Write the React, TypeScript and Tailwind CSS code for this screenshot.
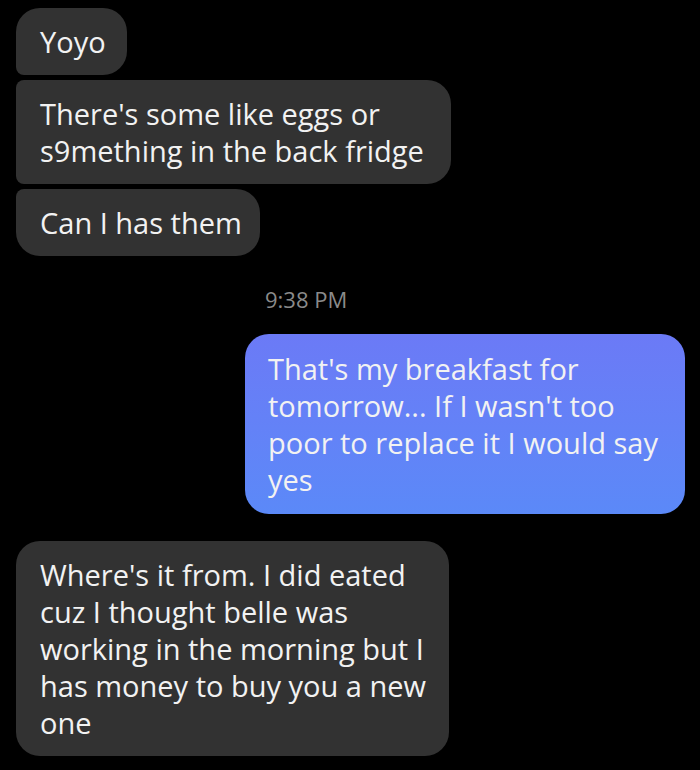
const FONT = "font-['Open_Sans',_'Noto_Sans',_sans-serif]";

type Msg = { lines: string[]; shape: string; width: string };

const firstGroup: Msg[] = [
  { lines: ["Yoyo"], shape: "rounded-tl-[24px] rounded-tr-[24px] rounded-br-[24px] rounded-bl-[8px]", width: "w-[111px]" },
  {
    lines: ["There's some like eggs or", "s9mething in the back fridge"],
    shape: "rounded-tl-[8px] rounded-tr-[24px] rounded-br-[24px] rounded-bl-[8px]",
    width: "w-[435px]",
  },
  { lines: ["Can I has them"], shape: "rounded-tl-[8px] rounded-tr-[24px] rounded-br-[24px] rounded-bl-[24px]", width: "w-[244px]" },
];

function Bubble({ msg, tone }: { msg: Msg; tone: "gray" | "blue" }) {
  return (
    <div
      className={[
        "text-[29px] leading-[37px] text-[#f2f2f2] whitespace-nowrap",
        msg.shape,
        msg.width,
        tone === "gray" ? "bg-[#323232] py-[15px] px-6" : "bg-gradient-to-b from-[#6b7af6] to-[#5b89f8] py-[16px] pl-[23px] pr-2",
      ].join(" ")}
    >
      {msg.lines.map((l, i) => (
        <div key={i}>{l}</div>
      ))}
    </div>
  );
}

export default function App() {
  return (
    <div className={`w-[700px] h-[770px] bg-black overflow-hidden pt-2 ${FONT}`}>
      {/* received */}
      <div className="flex flex-col gap-[5px] pl-4">
        {firstGroup.map((m, i) => (
          <Bubble key={i} msg={m} tone="gray" />
        ))}
      </div>

      {/* timestamp */}
      <div className="pl-[265px] mt-[29px] text-[22px] leading-[28px] text-[#8a8a8a]">9:38 PM</div>

      {/* sent */}
      <div className="flex justify-end pr-[15px] mt-[21px]">
        <Bubble
          tone="blue"
          msg={{
            lines: ["That's my breakfast for", "tomorrow... If I wasn't too", "poor to replace it I would say", "yes"],
            shape: "rounded-[24px]",
            width: "w-[440px]",
          }}
        />
      </div>

      {/* received */}
      <div className="pl-4 mt-[27px]">
        <Bubble
          tone="gray"
          msg={{
            lines: [
              "Where's it from. I did eated",
              "cuz I thought belle was",
              "working in the morning but I",
              "has money to buy you a new",
              "one",
            ],
            shape: "rounded-[24px]",
            width: "w-[433px]",
          }}
        />
      </div>
    </div>
  );
}
